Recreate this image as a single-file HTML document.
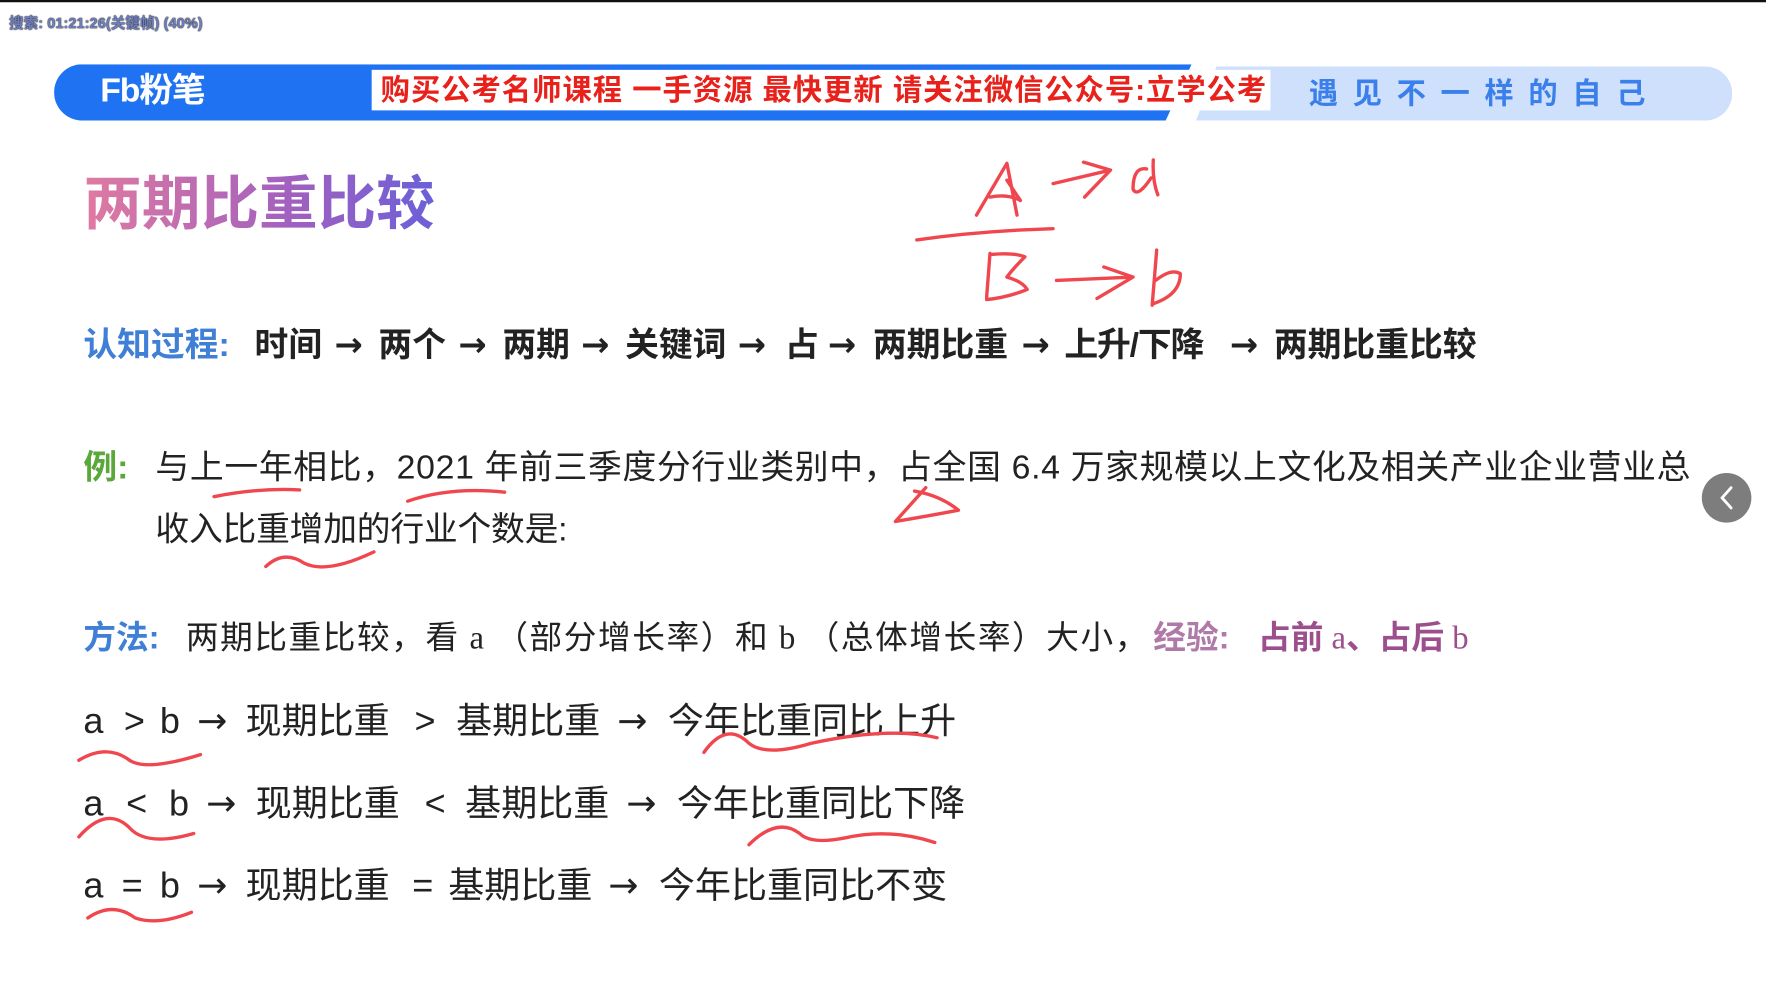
<!DOCTYPE html>
<html><head><meta charset="utf-8">
<style>
html,body{margin:0;padding:0;background:#fff;width:1766px;height:994px;overflow:hidden}
#w{position:absolute;left:0;top:0;width:1568px;height:883px;transform:scale(1.12628);transform-origin:0 0;font-family:"Liberation Sans","Noto Sans CJK SC",sans-serif;color:#222}
.a{position:absolute;white-space:nowrap}
.blue{color:#3f7fd6}
.b{font-weight:bold}
.serif{font-family:"Liberation Serif","Noto Serif CJK SC",serif;font-weight:normal}
.ar{font-family:"DejaVu Sans",sans-serif}
</style></head><body>
<div id="w">
<div class="a" style="left:0;top:0;width:1568px;height:2px;background:#111"></div>
<div class="a b" style="left:8px;top:10px;font-size:13px;color:#6d7fc0;text-shadow:0 0 1px #111,0 0 1px #111">搜索: 01:21:26(关键帧) (40%)</div>

<!-- banner -->
<div class="a" style="left:1040px;top:59px;width:498px;height:48px;background:#cfe0fc;border-radius:0 25px 25px 0;clip-path:polygon(40px 0,100% 0,100% 100%,22px 100%)"></div>
<div class="a" style="left:48px;top:57px;width:1010px;height:50px;background:#1f73f3;border-radius:25px 0 0 25px;clip-path:polygon(0 0,100% 0,987px 100%,0 100%)"></div>
<div class="a b" style="left:89px;top:63px;font-size:30px;line-height:36px;color:#fff;letter-spacing:-1px">Fb粉笔</div>
<div class="a" style="left:330px;top:62px;width:798px;height:36px;background:#fff"></div>
<div class="a b" style="left:338px;top:63px;font-size:26px;line-height:34px;color:#e8211b;letter-spacing:0.9px">购买公考名师课程 一手资源 最快更新 请关注微信公众号:立学公考</div>
<div class="a b" style="left:1162px;top:67px;font-size:26px;line-height:32px;color:#3b80ea;letter-spacing:13px">遇见不一样的自己</div>

<!-- title -->
<div class="a b" style="left:74px;top:150px;font-size:52px;line-height:64px;background:linear-gradient(90deg,#e07aa0,#a060c0 60%,#6a60d8);-webkit-background-clip:text;background-clip:text;color:transparent">两期比重比较</div>

<!-- cognition -->
<div class="a b" style="top:288px;font-size:30px;line-height:38px">
<span class="a blue" style="left:74px">认知过程:</span>
<span class="a" style="left:226px">时间</span><span class="a ar" style="left:297px">→</span>
<span class="a" style="left:336px">两个</span><span class="a ar" style="left:407px">→</span>
<span class="a" style="left:446px">两期</span><span class="a ar" style="left:516px">→</span>
<span class="a" style="left:555px">关键词</span><span class="a ar" style="left:655px">→</span>
<span class="a" style="left:697px">占</span><span class="a ar" style="left:735px">→</span>
<span class="a" style="left:775px">两期比重</span><span class="a ar" style="left:907px">→</span>
<span class="a" style="left:945px;letter-spacing:-1px">上升/下降</span><span class="a ar" style="left:1092px">→</span>
<span class="a" style="left:1131px">两期比重比较</span>
</div>

<!-- example -->
<div class="a b" style="left:74px;top:397px;font-size:30px;line-height:38px;color:#5aa83c">例:</div>
<div class="a" style="left:138px;top:397px;font-size:30px;line-height:38px;letter-spacing:0.6px">与上一年相比，2021 年前三季度分行业类别中，占全国 6.4 万家规模以上文化及相关产业企业营业总</div>
<div class="a" style="left:138px;top:452px;font-size:30px;line-height:38px;letter-spacing:-0.2px">收入比重增加的行业个数是:</div>

<!-- method -->
<div class="a b blue" style="left:74px;top:548px;font-size:29px;line-height:38px">方法:</div>
<div class="a" style="left:165px;top:548px;font-size:29px;line-height:38px;letter-spacing:1.4px">两期比重比较，看<span class="serif"> a </span>（部分增长率）和<span class="serif"> b </span>（总体增长率）大小，</div>
<div class="a b" style="left:1024px;top:548px;font-size:29px;line-height:38px;color:#b07aa8">经验:</div>
<div class="a b" style="left:1117px;top:548px;font-size:29px;line-height:38px;color:#9c4f8c">占前<span class="serif"> a</span>、占后<span class="serif"> b</span></div>

<!-- rows -->
<div class="a" style="top:620px;font-size:32px;line-height:40px">
<span class="a" style="left:74px">a</span><span class="a" style="left:110px">&gt;</span><span class="a" style="left:142px">b</span><span class="a ar" style="left:175px">→</span>
<span class="a" style="left:218px">现期比重</span><span class="a" style="left:368px">&gt;</span><span class="a" style="left:405px">基期比重</span><span class="a ar" style="left:548px">→</span><span class="a" style="left:593px">今年比重同比上升</span>
</div>
<div class="a" style="top:693px;font-size:32px;line-height:40px">
<span class="a" style="left:74px">a</span><span class="a" style="left:112px">&lt;</span><span class="a" style="left:150px">b</span><span class="a ar" style="left:183px">→</span>
<span class="a" style="left:227px">现期比重</span><span class="a" style="left:377px">&lt;</span><span class="a" style="left:413px">基期比重</span><span class="a ar" style="left:556px">→</span><span class="a" style="left:601px">今年比重同比下降</span>
</div>
<div class="a" style="top:766px;font-size:32px;line-height:40px">
<span class="a" style="left:74px">a</span><span class="a" style="left:108px">=</span><span class="a" style="left:142px">b</span><span class="a ar" style="left:175px">→</span>
<span class="a" style="left:218px">现期比重</span><span class="a" style="left:366px">=</span><span class="a" style="left:398px">基期比重</span><span class="a ar" style="left:540px">→</span><span class="a" style="left:585px">今年比重同比不变</span>
</div>

<!-- nav button -->
<div class="a" style="left:1511px;top:420px;width:44px;height:44px;border-radius:50%;background:#7d7d7d"></div>
<svg class="a" style="left:1511px;top:420px" width="44" height="44"><path d="M26 13 L18 22 L26 31" stroke="#fff" stroke-width="2.5" fill="none" stroke-linecap="round"/></svg>

<!-- handwriting -->
<svg class="a" style="left:0;top:0" width="1568" height="883" viewBox="0 0 1568 883" fill="none" stroke="#f0474f" stroke-width="3" stroke-linecap="round" stroke-linejoin="round">
<path d="M867 191 L894 145 L903 191 M879 175 Q895 172 906 178 L894 160"/>
<path d="M935 163 L986 151 M962 144 L986 151 L963 175"/>
<path d="M1018 150 Q1006 148 1006 168 Q1010 176 1022 158 M1024 142 Q1023 160 1028 173"/>
<path d="M814 213 Q870 205 935 203"/>
<path d="M879 225 L876 264 M879 226 Q900 224 910 228 Q900 238 894 246 Q908 250 912 257 Q895 264 876 266"/>
<path d="M938 249 L1006 246 M980 237 L1006 246 L974 265"/>
<path d="M1027 222 L1023 271 M1026 249 Q1040 238 1048 243 Q1048 262 1023 270"/>
<path d="M190 441 Q230 433 266 435"/>
<path d="M362 445 Q400 432 448 437"/>
<path d="M822 433 L795 463 Q825 458 851 453 Q835 440 812 436"/>
<path d="M236 503 Q252 488 270 500 Q290 510 332 490"/>
<path d="M70 675 Q95 660 115 675 Q130 685 178 670"/>
<path d="M625 668 Q645 640 665 660 Q680 672 720 660 Q790 645 832 655"/>
<path d="M70 743 Q95 715 115 735 Q130 752 172 740"/>
<path d="M665 750 Q690 725 710 740 Q720 750 750 744 Q790 735 830 748"/>
<path d="M78 815 Q100 800 120 815 Q140 822 170 810"/>
</svg>
</div>
</body></html>
